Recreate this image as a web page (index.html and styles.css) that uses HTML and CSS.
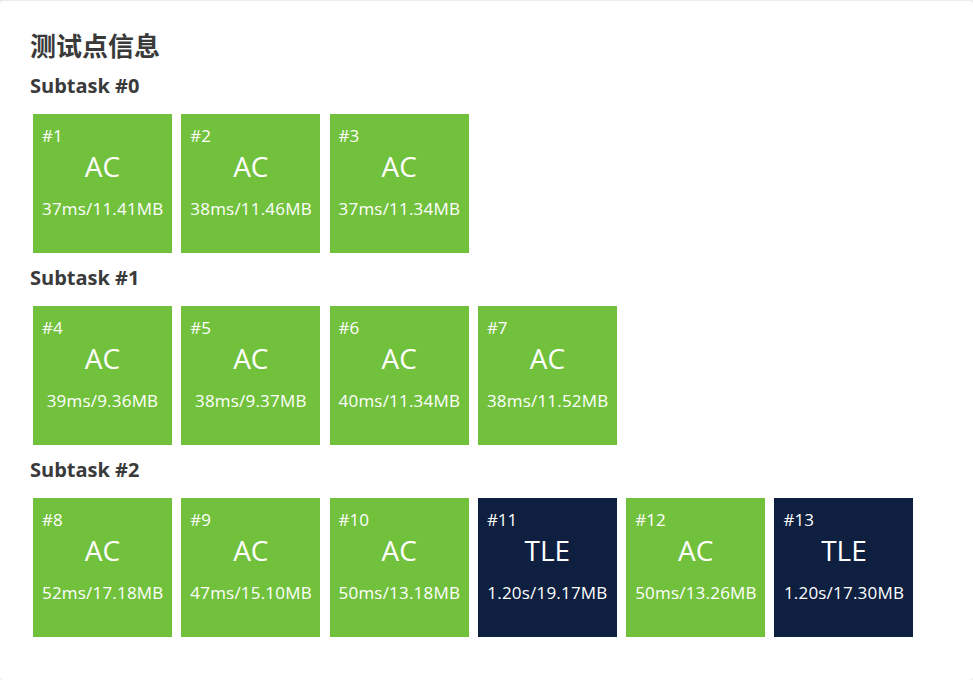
FILE: index.html
```html
<!DOCTYPE html>
<html lang="zh-CN">
<head>
<meta charset="utf-8">
<title>测试点信息</title>
<link rel="stylesheet" href="styles.css">
</head>
<body>
<div class="page">
  <section class="card">
    <h2 class="title">测试点信息</h2>

    <h3 class="subtask">Subtask #0</h3>
    <div class="cases">
      <div class="case ac"><div class="id">#1</div><div class="status">AC</div><div class="stat">37ms/11.41MB</div></div>
      <div class="case ac"><div class="id">#2</div><div class="status">AC</div><div class="stat">38ms/11.46MB</div></div>
      <div class="case ac"><div class="id">#3</div><div class="status">AC</div><div class="stat">37ms/11.34MB</div></div>
    </div>

    <h3 class="subtask">Subtask #1</h3>
    <div class="cases">
      <div class="case ac"><div class="id">#4</div><div class="status">AC</div><div class="stat">39ms/9.36MB</div></div>
      <div class="case ac"><div class="id">#5</div><div class="status">AC</div><div class="stat">38ms/9.37MB</div></div>
      <div class="case ac"><div class="id">#6</div><div class="status">AC</div><div class="stat">40ms/11.34MB</div></div>
      <div class="case ac"><div class="id">#7</div><div class="status">AC</div><div class="stat">38ms/11.52MB</div></div>
    </div>

    <h3 class="subtask">Subtask #2</h3>
    <div class="cases">
      <div class="case ac"><div class="id">#8</div><div class="status">AC</div><div class="stat">52ms/17.18MB</div></div>
      <div class="case ac"><div class="id">#9</div><div class="status">AC</div><div class="stat">47ms/15.10MB</div></div>
      <div class="case ac"><div class="id">#10</div><div class="status">AC</div><div class="stat">50ms/13.18MB</div></div>
      <div class="case tle"><div class="id">#11</div><div class="status">TLE</div><div class="stat">1.20s/19.17MB</div></div>
      <div class="case ac"><div class="id">#12</div><div class="status">AC</div><div class="stat">50ms/13.26MB</div></div>
      <div class="case tle"><div class="id">#13</div><div class="status">TLE</div><div class="stat">1.20s/17.30MB</div></div>
    </div>
  </section>
</div>
</body>
</html>
```
FILE: styles.css
```css
html, body {
  margin: 0;
  padding: 0;
  background: #ececec;
}
body {
  font-family: "Open Sans", "Noto Sans CJK SC", sans-serif;
  color: #3a3a3a;
}
.page {
  padding-top: 1px;
  height: 679px;
}
.card {
  background: #fff;
  border-radius: 4px;
  height: 100%;
  box-sizing: border-box;
  padding: 26px 30px 0 30px;
}
.title {
  margin: 0;
  font-family: "Noto Sans CJK SC", sans-serif;
  font-size: 26px;
  font-weight: 700;
  line-height: 36px;
  color: #3a3a3a;
}
.subtask {
  margin: 8.5px 0 0 0;
  font-size: 20px;
  font-weight: 700;
  line-height: 28px;
  color: #3a3a3a;
}
.cases {
  display: flex;
  gap: 9.3px;
  margin: 14.5px 0 0 3px;
}
.cases + .subtask {
  margin-top: 10.5px;
}
.case {
  width: 139px;
  height: 139px;
  box-sizing: border-box;
  padding: 11px 9px 0 9px;
  color: #fff;
  display: flex;
  flex-direction: column;
}
.case.ac { background: #72c13d; }
.case.tle { background: #0e1f40; }
.id {
  font-size: 17px;
  line-height: 22px;
}
.status {
  text-align: center;
  font-size: 28px;
  line-height: 38px;
}
.stat {
  margin-top: 11.5px;
  text-align: center;
  font-size: 17px;
  line-height: 24px;
  white-space: nowrap;
  letter-spacing: 0.2px;
}
```
